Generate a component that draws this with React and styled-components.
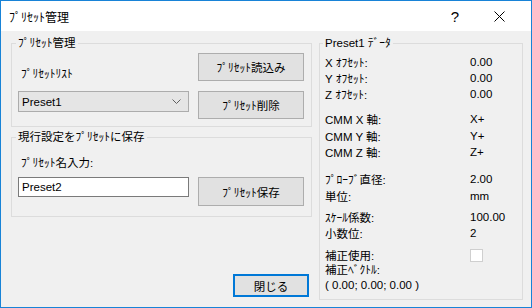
import React from 'react'
import styled, { createGlobalStyle } from 'styled-components'

const GlobalStyle = createGlobalStyle`
  body {
    margin: 0;
    font-family: "Liberation Sans Narrow", "Liberation Sans", "Noto Sans CJK JP", sans-serif;
    font-size: 11.5px;
    color: #000;
  }
`;

const Window = styled.div`
  width: 532px;
  height: 308px;
  box-sizing: border-box;
  border: 1px solid #1883d7;
  background: #f0f0f0;
  display: flex;
  flex-direction: column;
`;

const TitleBar = styled.div`
  height: 30px;
  background: #fff;
  display: flex;
  align-items: center;
  padding: 0 10px 0 8px;
`;

const Title = styled.div`
  flex: 1;
  font-family: "Noto Sans CJK JP", sans-serif;
  font-size: 12px;
`;

const TitleButton = styled.div`
  width: 44px;
  height: 30px;
  display: flex;
  align-items: center;
  justify-content: center;
  font-family: "Liberation Sans", sans-serif;
  font-size: 15px;
`;

const Body = styled.div`
  flex: 1;
  display: flex;
  gap: 7px;
  padding: 5px 8px 7px 10px;
`;

const LeftCol = styled.div`
  width: 301px;
  display: flex;
  flex-direction: column;
  gap: 3px;
`;

const Group = styled.fieldset`
  margin: 0;
  border: 1px solid #dcdcdc;
  padding: ${({ $pad }) => $pad};
  min-width: 0;
  box-sizing: border-box;
`;

const Legend = styled.legend`
  padding: 0 2px;
  margin-left: -2px;
  line-height: 14px;
`;

const Grid = styled.div`
  display: grid;
  grid-template-columns: 171px 106px;
  column-gap: 9px;
  row-gap: ${({ $rowGap }) => $rowGap}px;
  align-items: start;
`;

const Label = styled.div`
  line-height: 14px;
  margin-left: 3px;
  align-self: ${({ $align }) => $align || 'start'};
  grid-column: ${({ $span }) => ($span ? '1 / span 2' : 'auto')};
`;

const Button = styled.div`
  box-sizing: border-box;
  height: ${({ $h }) => $h || 28}px;
  width: ${({ $w }) => ($w ? `${$w}px` : 'auto')};
  background: #e1e1e1;
  border: ${({ $focus }) => ($focus ? '2px solid #0078d7' : '1px solid #adadad')};
  display: flex;
  align-items: center;
  justify-content: center;
`;

const Combo = styled.div`
  box-sizing: border-box;
  height: 21px;
  background: #e5e5e5;
  border: 1px solid #acacac;
  display: flex;
  align-items: center;
  justify-content: space-between;
  padding: 0 7px 0 3px;
`;

const TextBox = styled.input`
  box-sizing: border-box;
  height: 20px;
  width: 171px;
  margin: 0;
  background: #fff;
  border: 1px solid #7a7a7a;
  padding: 0 3px;
  font: inherit;
  color: #000;
  outline: none;
`;

const CloseButton = styled(Button)`
  margin-top: auto;
  align-self: flex-end;
  margin-right: 3px;
  margin-bottom: 3px;
`;

const DataGroup = styled(Group)`
  flex: 1;
`;

const Row = styled.div`
  display: flex;
  align-items: center;
  height: 16px;
  margin-top: ${({ $mt }) => $mt || 0}px;
`;

const Key = styled.div`
  width: 145px;
  white-space: nowrap;
`;

const Value = styled.div``;

const CheckBox = styled.div`
  width: 13px;
  height: 13px;
  box-sizing: border-box;
  background: #fff;
  border: 1px solid #cfcfcf;
`;

const rows = [
  ['X ｵﾌｾｯﾄ:', '0.00', 0],
  ['Y ｵﾌｾｯﾄ:', '0.00', 0],
  ['Z ｵﾌｾｯﾄ:', '0.00', 0],
  ['CMM X 軸:', 'X+', 9],
  ['CMM Y 軸:', 'Y+', 1],
  ['CMM Z 軸:', 'Z+', 0],
  ['ﾌﾟﾛｰﾌﾞ直径:', '2.00', 11],
  ['単位:', 'mm', 1],
  ['ｽｹｰﾙ係数:', '100.00', 5],
  ['小数位:', '2', 0],
];

const App = () => {
  return (
    <>
      <GlobalStyle />
      <Window>
        <TitleBar>
          <Title>ﾌﾟﾘｾｯﾄ管理</Title>
          <TitleButton>?</TitleButton>
          <TitleButton>
            <svg width="11" height="11" viewBox="0 0 11 11">
              <path d="M0.5 0.5 L10.5 10.5 M10.5 0.5 L0.5 10.5" stroke="#000" strokeWidth="1" fill="none" />
            </svg>
          </TitleButton>
        </TitleBar>
        <Body>
          <LeftCol>
            <Group $pad="3px 6px 7px 6px">
              <Legend>ﾌﾟﾘｾｯﾄ管理</Legend>
              <Grid $rowGap={10}>
                <Label $align="end">ﾌﾟﾘｾｯﾄﾘｽﾄ</Label>
                <Button>ﾌﾟﾘｾｯﾄ読込み</Button>
                <Combo>
                  <span>Preset1</span>
                  <svg width="9" height="5" viewBox="0 0 9 5">
                    <path d="M0.5 0.5 L4.5 4.5 L8.5 0.5" stroke="#606060" strokeWidth="1" fill="none" />
                  </svg>
                </Combo>
                <Button>ﾌﾟﾘｾｯﾄ削除</Button>
              </Grid>
            </Group>
            <Group $pad="12px 6px 10px 6px">
              <Legend>現行設定をﾌﾟﾘｾｯﾄに保存</Legend>
              <Grid $rowGap={7}>
                <Label $span>ﾌﾟﾘｾｯﾄ名入力:</Label>
                <TextBox defaultValue="Preset2" />
                <Button $h={29}>ﾌﾟﾘｾｯﾄ保存</Button>
              </Grid>
            </Group>
            <CloseButton $focus $w={76} $h={23}>閉じる</CloseButton>
          </LeftCol>
          <DataGroup $pad="4px 5px">
            <Legend>Preset1 ﾃﾞｰﾀ</Legend>
            {rows.map(([k, v, mt]) => (
              <Row key={k} $mt={mt}>
                <Key>{k}</Key>
                <Value>{v}</Value>
              </Row>
            ))}
            <Row $mt={6}>
              <Key>補正使用:</Key>
              <CheckBox />
            </Row>
            <Row $mt={-2}>
              <Key>補正ﾍﾞｸﾄﾙ:</Key>
            </Row>
            <Row>
              <Key>( 0.00; 0.00; 0.00 )</Key>
            </Row>
          </DataGroup>
        </Body>
      </Window>
    </>
  )
}

export default App;
